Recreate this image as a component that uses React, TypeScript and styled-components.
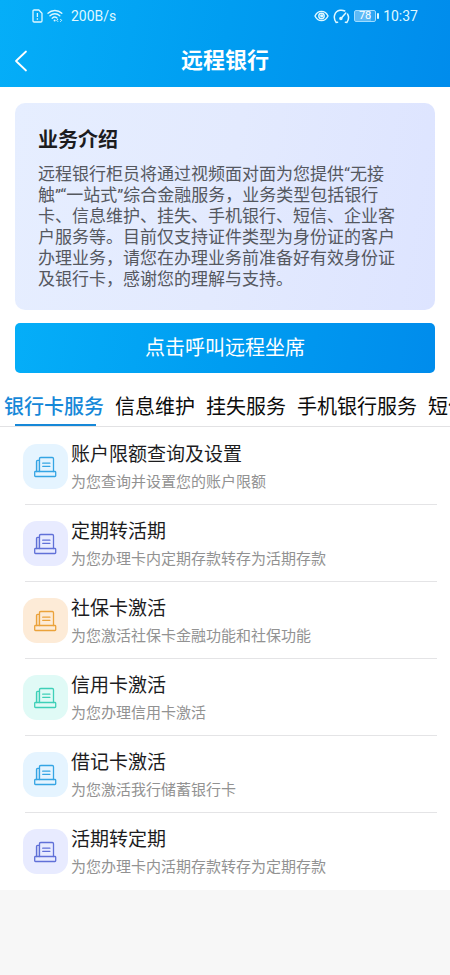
import React, { useState } from 'react';
import styled, { createGlobalStyle } from 'styled-components';

const GlobalStyle = createGlobalStyle`
  *, *::before, *::after { box-sizing: border-box; }
  body {
    margin: 0;
    background: #f7f7f7;
    font-family: Roboto, "Noto Sans CJK SC", sans-serif;
    color: #1c1c1e;
  }
  button { font-family: inherit; border: 0; padding: 0; background: none; cursor: pointer; }
  h1, h2, h3, p, ul { margin: 0; padding: 0; }
`;

const brandGradient = 'linear-gradient(100deg, #05aef8 0%, #009df1 50%, #008cec 100%)';

const Page = styled.div`
  min-height: 100vh;
  display: flex;
  flex-direction: column;
`;

const Header = styled.header`
  background: ${brandGradient};
  color: #fff;
`;

const StatusBar = styled.div`
  display: flex;
  justify-content: space-between;
  align-items: center;
  height: 32px;
  padding: 0 32px;
  font-size: 14px;
  line-height: 20px;
  color: #dff8ff;
`;

const StatusGroup = styled.div`
  display: flex;
  align-items: center;
  gap: 4px;
`;

const Speed = styled.span`
  margin-left: 4px;
`;

const NavBar = styled.div`
  display: grid;
  grid-template-columns: 44px 1fr 44px;
  align-items: center;
  height: 55px;
  padding-top: 3px;
`;

const BackButton = styled.button`
  display: flex;
  align-items: center;
  height: 44px;
  padding-left: 14px;
  color: #fff;
`;

const NavTitle = styled.h1`
  text-align: center;
  font-size: 22px;
  line-height: 32px;
  font-weight: 700;
`;

const Content = styled.main`
  background: #fff;
`;

const IntroCard = styled.section`
  margin: 16px 15px 13px;
  padding: 23px 36px 20px 23px;
  border-radius: 10px;
  background: linear-gradient(100deg, #e6eeff 0%, #e3eafe 50%, #dde4ff 100%);
`;

const IntroTitle = styled.h2`
  font-size: 20px;
  line-height: 28px;
  font-weight: 700;
`;

const IntroText = styled.p`
  margin-top: 10px;
  font-size: 17px;
  line-height: 21px;
  color: #55585f;
`;

const CallButton = styled.button`
  display: block;
  width: calc(100% - 30px);
  height: 50px;
  margin: 0 15px;
  border-radius: 5px;
  background: ${brandGradient};
  color: #fff;
  font-size: 20px;
  line-height: 28px;
`;

const Tabs = styled.div`
  display: flex;
  gap: 11px;
  margin-top: 16px;
  padding-left: 4px;
  overflow-x: auto;
  scrollbar-width: none;
  border-bottom: 1px solid #e2e2e4;
`;

const Tab = styled.button<{ $active: boolean }>`
  display: flex;
  flex-direction: column;
  flex: none;
  height: 37px;
  padding-top: 4px;
  font-size: 20px;
  line-height: 28px;
  font-weight: ${p => (p.$active ? 500 : 400)};
  color: ${p => (p.$active ? '#1688d8' : '#0c0c0c')};

  &::after {
    content: '';
    align-self: stretch;
    height: 2px;
    margin: 3px 8px 0 11px;
    background: ${p => (p.$active ? '#1688d8' : 'transparent')};
  }
`;

const List = styled.ul`
  list-style: none;
  padding: 1px 13px 1px 23px;
`;

const Row = styled.li`
  &:not(:last-child)::after {
    content: '';
    display: block;
    height: 1px;
    margin-left: 2px;
    background: #e4e4e6;
  }
`;

const RowButton = styled.button`
  display: flex;
  align-items: center;
  gap: 3px;
  width: 100%;
  height: 76px;
  text-align: left;
`;

const IconTile = styled.span<{ $bg: string; $fg: string }>`
  display: flex;
  align-items: center;
  justify-content: center;
  flex: none;
  width: 45px;
  height: 45px;
  margin-top: 1px;
  border-radius: 14px;
  background: ${p => p.$bg};
  color: ${p => p.$fg};
`;

const RowText = styled.span`
  display: flex;
  flex-direction: column;
  gap: 2px;
  padding-top: 2px;
`;

const RowTitle = styled.span`
  font-size: 19px;
  line-height: 28px;
  color: #1c1c1e;
`;

const RowNote = styled.span`
  font-size: 15px;
  line-height: 22px;
  color: #929292;
`;

const SimIcon = () => (
  <svg width="11" height="14" viewBox="0 0 11 14" fill="none" stroke="currentColor" strokeWidth="1.3" aria-hidden="true">
    <path d="M1 2.2Q1 1 2.2 1H6.8L10 4.2V11.8Q10 13 8.8 13H2.2Q1 13 1 11.8Z" />
    <path d="M5.4 4V8M5.4 9.3V10.7" />
  </svg>
);

const WifiIcon = () => (
  <svg width="16" height="14" viewBox="0 0 16 14" fill="none" stroke="currentColor" strokeWidth="1.4" strokeLinecap="round" aria-hidden="true">
    <path d="M1 4.3C4.8 .5 11 .5 14.8 4.3M3 6.8C5.8 4.1 10 4.1 12.8 6.8M5.2 9.2C6.8 7.8 8.6 7.8 10 9" />
    <circle cx="7.6" cy="11.6" r="1" fill="currentColor" stroke="none" />
    <path d="M10.8 10.3L9.8 11.4L10.8 12.5M13.6 10.3L14.6 11.4L13.6 12.5" strokeWidth="1" />
  </svg>
);

const EyeIcon = () => (
  <svg width="15" height="14" viewBox="0 0 15 14" fill="none" stroke="currentColor" strokeWidth="1.4" aria-hidden="true">
    <path d="M1 7C3.8 .8 11.2 .8 14 7C11.2 13.2 3.8 13.2 1 7Z" />
    <circle cx="7.5" cy="7" r="2.7" />
    <circle cx="7.7" cy="6.8" r="1.6" fill="currentColor" stroke="none" />
  </svg>
);

const GaugeIcon = () => (
  <svg width="17" height="15" viewBox="0 0 17 15" fill="none" stroke="currentColor" strokeWidth="1.5" strokeLinecap="round" aria-hidden="true">
    <path d="M4.6 13.3L3.2 13.5C-.4 8.8 1.4 2.2 7 1.3C8.8 1 10.4 1.3 11.7 2M14.6 5.1C16 7.8 15.7 11 13.8 13.5L12.4 13.3" />
    <path d="M12.8 4L8 9.6" />
    <circle cx="7.9" cy="9.6" r="1" fill="currentColor" />
  </svg>
);

const Battery = styled.span`
  display: flex;
  align-items: center;
  gap: 1px;

  &::after {
    content: '';
    width: 2px;
    height: 6px;
    border-radius: 1px;
    background: currentColor;
  }
`;

const BatteryBody = styled.span`
  width: 22px;
  height: 12px;
  border: 1px solid #9fdcff;
  border-radius: 2px;
  background: linear-gradient(90deg, #5db9f6 78%, #2ea5f2 78%);
  font-size: 11px;
  line-height: 10px;
  text-align: center;
  color: #fff;
`;

const ChevronIcon = () => (
  <svg width="14" height="22" viewBox="0 0 14 22" fill="none" stroke="currentColor" strokeWidth="1.8" strokeLinecap="round" strokeLinejoin="round" aria-hidden="true">
    <path d="M12 1.5L2 11L12 20.5" />
  </svg>
);

const DocumentIcon = () => (
  <svg width="23" height="23" viewBox="0 0 23 23" fill="none" stroke="currentColor" strokeWidth="1.3" strokeLinejoin="round" strokeLinecap="round" aria-hidden="true">
    <rect x=".7" y="16.5" width="21" height="5" rx=".8" />
    <path d="M5.5 16.5V3.7Q5.5 2.5 6.7 2.5H18.3Q19.5 2.5 19.5 3.7V16.5" />
    <path d="M2.5 16.5V6.4Q2.5 5.3 3.6 5.3H5.5" />
    <path d="M2.5 5.3H5.5V16.5H2.5Z" fill="currentColor" fillOpacity=".2" stroke="none" />
    <path d="M8.7 8.2H15.9M8.7 11.3H15.9" />
  </svg>
);

const tones = {
  blue: { bg: '#e5f4ff', fg: '#35a5e4' },
  violet: { bg: '#e8ebff', fg: '#6070d8' },
  orange: { bg: '#fdebd7', fg: '#eba23a' },
  teal: { bg: '#e0faf6', fg: '#3ed0b8' },
};

const tabs = ['银行卡服务', '信息维护', '挂失服务', '手机银行服务', '短信服务'];

const services: { title: string; note: string; tone: keyof typeof tones }[] = [
  { title: '账户限额查询及设置', note: '为您查询并设置您的账户限额', tone: 'blue' },
  { title: '定期转活期', note: '为您办理卡内定期存款转存为活期存款', tone: 'violet' },
  { title: '社保卡激活', note: '为您激活社保卡金融功能和社保功能', tone: 'orange' },
  { title: '信用卡激活', note: '为您办理信用卡激活', tone: 'teal' },
  { title: '借记卡激活', note: '为您激活我行储蓄银行卡', tone: 'blue' },
  { title: '活期转定期', note: '为您办理卡内活期存款转存为定期存款', tone: 'violet' },
];

export default function App() {
  const [active, setActive] = useState(0);

  return (
    <Page lang="zh-CN">
      <GlobalStyle />
      <Header>
        <StatusBar>
          <StatusGroup>
            <SimIcon />
            <WifiIcon />
            <Speed>200B/s</Speed>
          </StatusGroup>
          <StatusGroup>
            <EyeIcon />
            <GaugeIcon />
            <Battery><BatteryBody>78</BatteryBody></Battery>
            <span>10:37</span>
          </StatusGroup>
        </StatusBar>
        <NavBar>
          <BackButton type="button" aria-label="返回"><ChevronIcon /></BackButton>
          <NavTitle>远程银行</NavTitle>
        </NavBar>
      </Header>
      <Content>
        <IntroCard>
          <IntroTitle>业务介绍</IntroTitle>
          <IntroText>
            远程银行柜员将通过视频面对面为您提供“无接触”“一站式”综合金融服务，业务类型包括银行卡、信息维护、挂失、手机银行、短信、企业客户服务等。目前仅支持证件类型为身份证的客户办理业务，请您在办理业务前准备好有效身份证及银行卡，感谢您的理解与支持。
          </IntroText>
        </IntroCard>
        <CallButton type="button">点击呼叫远程坐席</CallButton>
        <Tabs role="tablist">
          {tabs.map((label, i) => (
            <Tab
              key={label}
              type="button"
              role="tab"
              aria-selected={i === active}
              $active={i === active}
              onClick={() => setActive(i)}
            >
              {label}
            </Tab>
          ))}
        </Tabs>
        <List>
          {services.map(({ title, note, tone }) => (
            <Row key={title}>
              <RowButton type="button">
                <IconTile $bg={tones[tone].bg} $fg={tones[tone].fg}><DocumentIcon /></IconTile>
                <RowText>
                  <RowTitle>{title}</RowTitle>
                  <RowNote>{note}</RowNote>
                </RowText>
              </RowButton>
            </Row>
          ))}
        </List>
      </Content>
    </Page>
  );
}
